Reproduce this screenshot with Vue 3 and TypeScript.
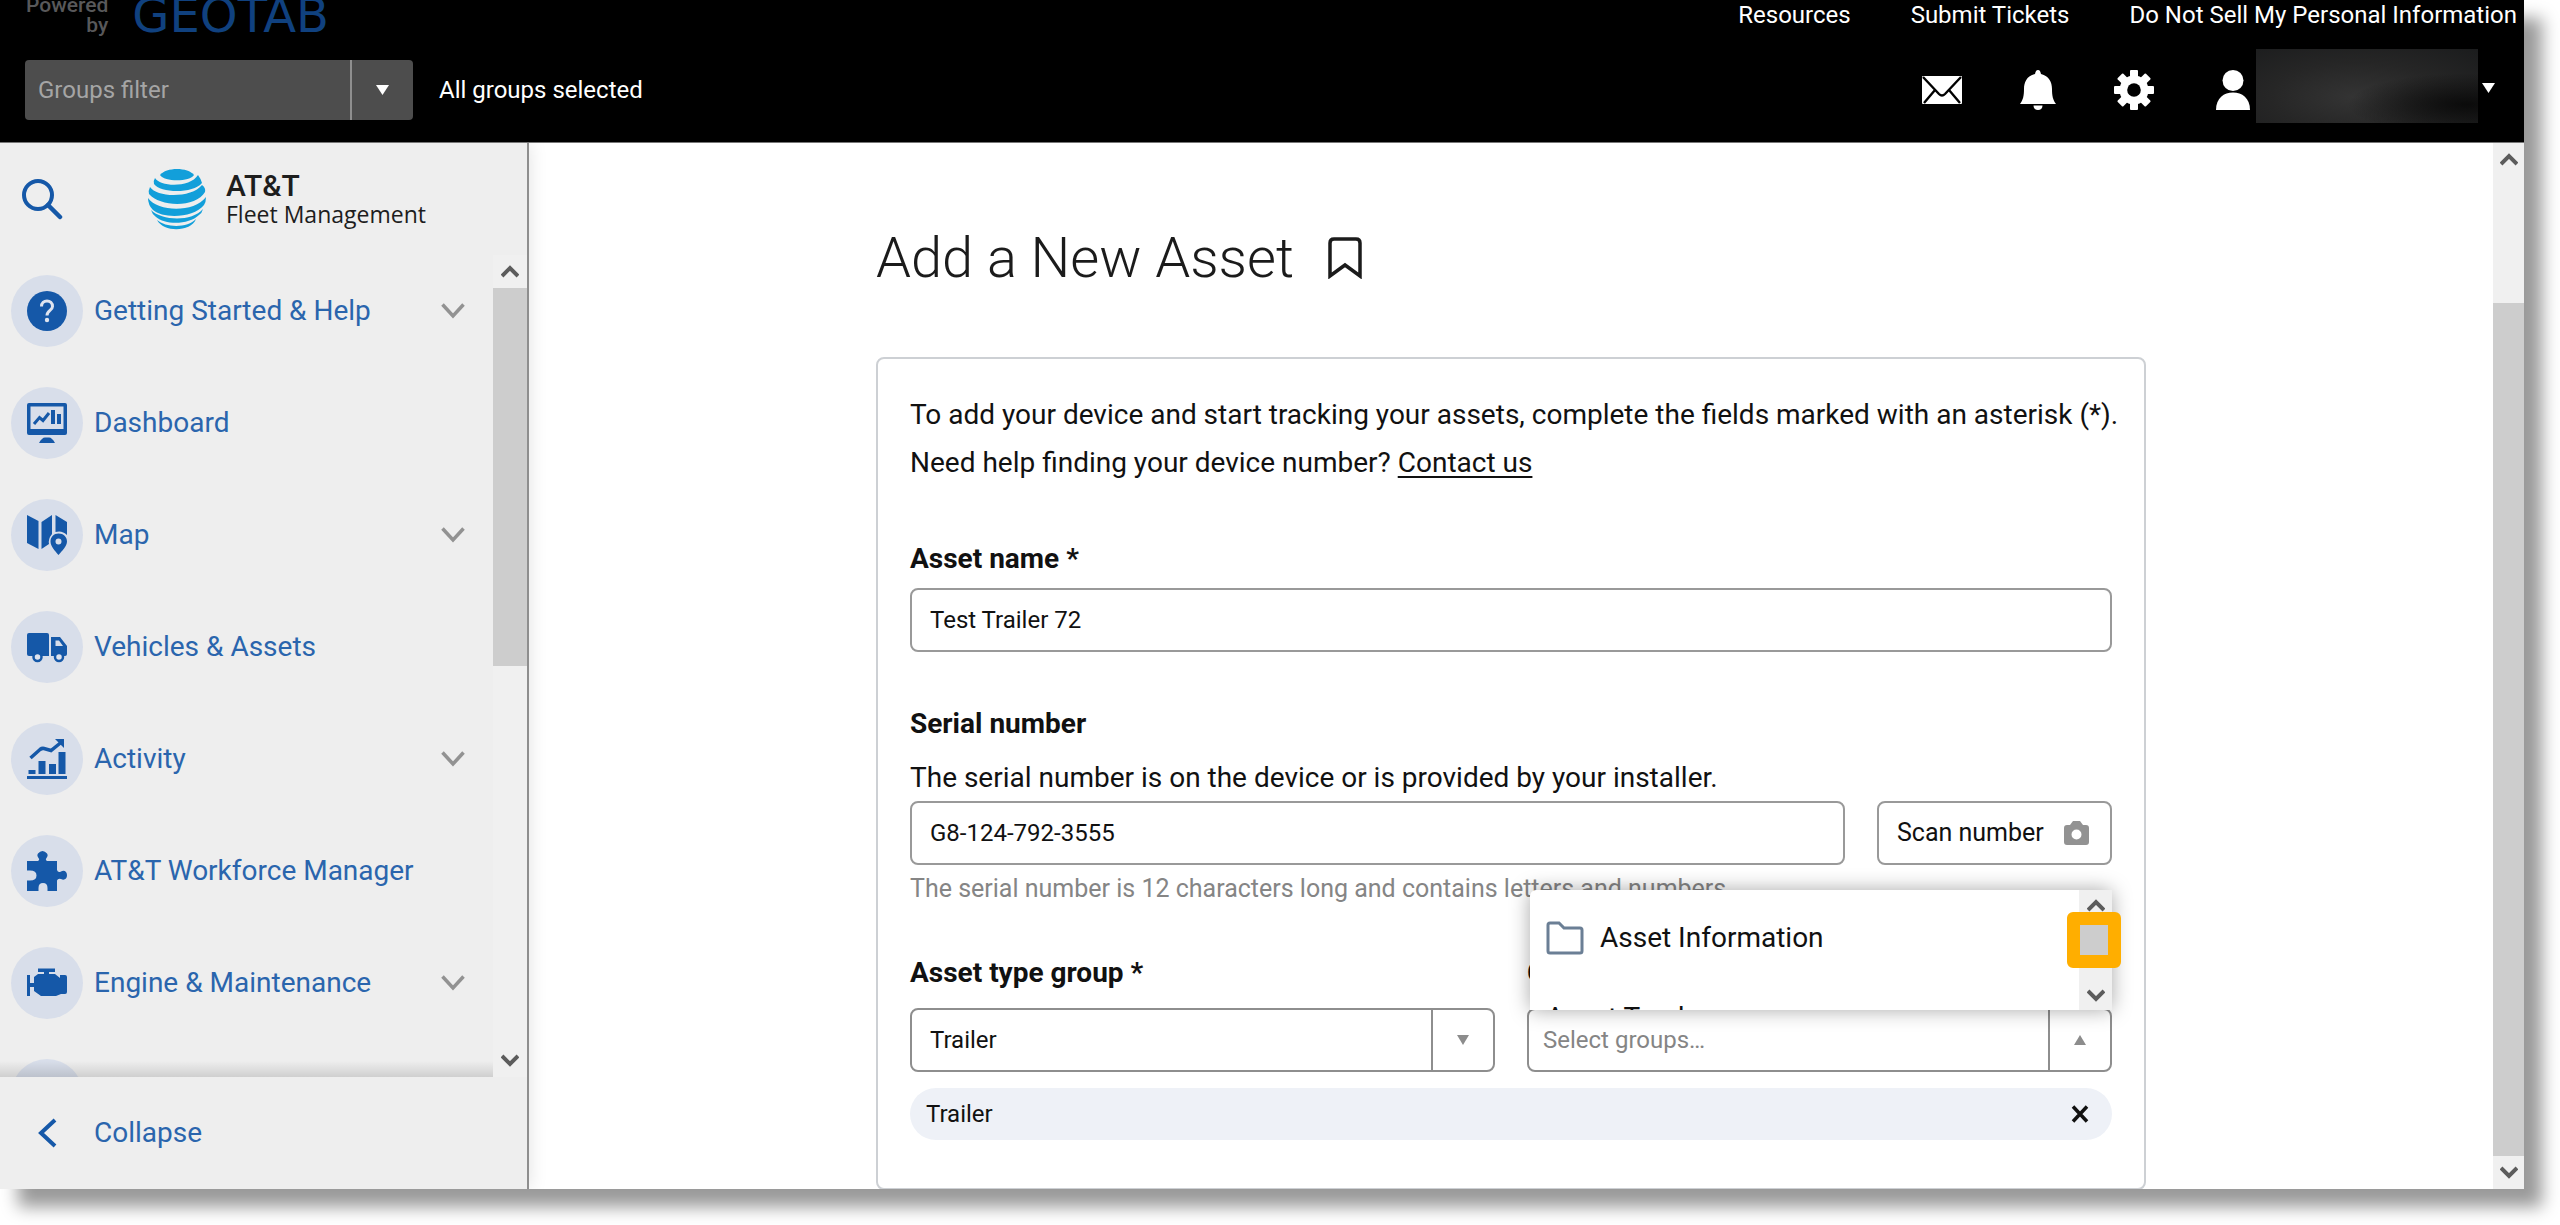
<script setup lang="ts">
import { ref } from 'vue'

interface MenuItem {
  id: string
  label: string
  expandable: boolean
}

const topLinks: string[] = ['Resources', 'Submit Tickets', 'Do Not Sell My Personal Information']

const menu: MenuItem[] = [
  { id: 'help', label: 'Getting Started & Help', expandable: true },
  { id: 'dashboard', label: 'Dashboard', expandable: false },
  { id: 'map', label: 'Map', expandable: true },
  { id: 'vehicles', label: 'Vehicles & Assets', expandable: false },
  { id: 'activity', label: 'Activity', expandable: true },
  { id: 'workforce', label: 'AT&T Workforce Manager', expandable: false },
  { id: 'engine', label: 'Engine & Maintenance', expandable: true },
]

const groupsFilter = ref('')
const assetName = ref('Test Trailer 72')
const serialNumber = ref('G8-124-792-3555')
const assetType = ref('Trailer')
const groupSearch = ref('')
</script>

<template>
  <div class="desk">
    <div class="window">
      <header class="topbar">
        <div class="topbar-row brand-row">
          <div class="powered">Powered<br />by</div>
          <div class="geotab">GEOTAB</div>
          <nav class="top-links">
            <a v-for="link in topLinks" :key="link" href="#">{{ link }}</a>
          </nav>
        </div>
        <div class="topbar-row tools-row">
          <div class="filter">
            <input v-model="groupsFilter" type="text" placeholder="Groups filter" aria-label="Groups filter" />
            <button type="button" aria-label="Open groups filter">
              <svg width="13" height="10" viewBox="0 0 13 10"><path d="M0 0H13L6.500 10Z" fill="#fff" /></svg>
            </button>
          </div>
          <span class="selected">All groups selected</span>
          <div class="actions">
            <button type="button" aria-label="Messages">
              <svg width="40" height="40" viewBox="0 0 40 40">
                <rect x="0" y="6" width="40" height="28" rx="1" fill="#fff" />
                <path d="M1 7L17 24Q20 27 23 24L39 7M2 33L13 20M38 33L27 20" fill="none" stroke="#000" stroke-width="2.4" />
              </svg>
            </button>
            <button type="button" aria-label="Notifications">
              <svg width="40" height="40" viewBox="0 0 40 40">
                <path d="M20 0C22 0 22.500 2 23 4C31 6 34 12 34 19C34 26 35 30 38 34H2C5 30 6 26 6 19C6 12 9 6 17 4C17.500 2 18 0 20 0Z" fill="#fff" />
                <path d="M15.500 35.500H24.500C24.500 38.500 22.500 40 20 40C17.500 40 15.500 38.500 15.500 35.500Z" fill="#fff" />
              </svg>
            </button>
            <button type="button" aria-label="Settings">
              <svg width="40" height="40" viewBox="0 0 40 40">
                <g fill="#fff">
                  <rect x="16" y="0" width="8" height="40" rx="1" />
                  <rect x="16" y="0" width="8" height="40" rx="1" transform="rotate(45 20 20)" />
                  <rect x="16" y="0" width="8" height="40" rx="1" transform="rotate(90 20 20)" />
                  <rect x="16" y="0" width="8" height="40" rx="1" transform="rotate(135 20 20)" />
                  <circle cx="20" cy="20" r="14.500" />
                </g>
                <circle cx="20" cy="20" r="6.800" fill="#000" />
              </svg>
            </button>
          </div>
          <button type="button" class="user" aria-label="User menu">
            <svg width="34" height="40" viewBox="0 0 34 40">
              <circle cx="17" cy="10.500" r="10.500" fill="#fff" />
              <path d="M0 40C0 28 8 22.500 17 22.500S34 28 34 40Z" fill="#fff" />
            </svg>
            <span class="user-name"></span>
            <svg class="user-caret" width="13" height="10" viewBox="0 0 13 10"><path d="M0 0H13L6.500 10Z" fill="#fff" /></svg>
          </button>
        </div>
      </header>

      <div class="body">
        <aside class="sidebar">
          <div class="side-head">
            <button type="button" class="search" aria-label="Search">
              <svg width="42" height="42" viewBox="0 0 42 42">
                <circle cx="17" cy="17" r="14" fill="none" stroke="#1558a8" stroke-width="4" />
                <path d="M27 27L39 39" stroke="#1558a8" stroke-width="4.500" stroke-linecap="round" />
              </svg>
            </button>
            <div class="logo">
              <svg width="58" height="62" viewBox="0 0 58 62" fill="#129fda">
                <path d="M12 7C18 -1 40 -1 46 7C42 14 16 14 12 7Z" />
                <path d="M7 10C12 19 42 20 50 7Q53 11 54 15C45 26 12 25 6 16Q5 13 7 10Z" />
                <path d="M2 19C9 30 44 30 54 17Q58 20 57 24C48 40 12 39 1 26Q0 23 2 19Z" />
                <path d="M0 30C10 44 46 45 58 29Q58 34 56 37C46 50 15 51 5 42Q0 37 0 30Z" />
                <path d="M3 42C14 53 44 54 55 41Q54 45 51 47C41 57 17 57 8 49Q4 46 3 42Z" />
                <path d="M9 52C18 60 40 60 48 51C43 64 16 65 9 52Z" />
              </svg>
              <div class="logo-text">
                <div class="logo-name">AT&amp;T</div>
                <div class="logo-sub">Fleet Management</div>
              </div>
            </div>
          </div>

          <div class="side-list">
            <nav class="menu">
              <a v-for="item in menu" :key="item.id" href="#" class="menu-item">
                <span class="bubble">
                  <svg width="40" height="40" viewBox="0 0 40 40" fill="#1558a8">
                    <template v-if="item.id === 'help'">
                      <circle cx="20" cy="20" r="20" />
                      <path d="M14.500 15.500C14.500 12 17 10 20 10S25.500 12 25.500 15.500C25.500 19.500 20 19.500 20 24.500" fill="none" stroke="#dfe4ef" stroke-width="3" />
                      <circle cx="20" cy="29" r="2.200" fill="#dfe4ef" />
                    </template>
                    <template v-else-if="item.id === 'dashboard'">
                      <path fill-rule="evenodd" d="M2 0H38Q40 0 40 2V30Q40 32 38 32H2Q0 32 0 30V2Q0 0 2 0ZM3.500 3.500V26H36.500V3.500Z" />
                      <path d="M7 21L12.500 14.500L16 17.500L22 10" fill="none" stroke="#1558a8" stroke-width="3" />
                      <rect x="24" y="7" width="4" height="14" />
                      <rect x="30" y="11" width="4" height="10" />
                      <path d="M12 40Q15 34.500 18 34.500H22Q25 34.500 28 40Z" />
                    </template>
                    <template v-else-if="item.id === 'map'">
                      <path d="M0 0L11.500 6V34L0 28Z" />
                      <path d="M14.500 7L25 0V19Q21 24 22 29L14.500 34Z" />
                      <path d="M28.500 0L40 7V20Q35 15 28.500 17Z" />
                      <path fill-rule="evenodd" d="M31.500 18.500C36.500 18.500 40 22 40 26.500C40 31 35 36 31.500 40C28 36 23.500 31 23.500 26.500C23.500 22 27 18.500 31.500 18.500ZM31.500 23.500A3 3 0 1 0 31.500 29.500A3 3 0 1 0 31.500 23.500Z" />
                    </template>
                    <template v-else-if="item.id === 'vehicles'">
                      <path d="M2 6H20Q22 6 22 8V29H2Q0 29 0 27V8Q0 6 2 6Z" />
                      <path fill-rule="evenodd" d="M24 10H33L40 19V27Q40 29 38 29H24ZM28.500 13.500V19H36L32 13.500Z" />
                      <circle cx="10.500" cy="30" r="4" fill="#dfe4ef" stroke="#1558a8" stroke-width="2.500" />
                      <circle cx="32" cy="30" r="4" fill="#dfe4ef" stroke="#1558a8" stroke-width="2.500" />
                    </template>
                    <template v-else-if="item.id === 'activity'">
                      <rect x="0" y="37" width="40" height="3" />
                      <rect x="1.500" y="31" width="7" height="4" />
                      <rect x="11.500" y="22" width="7" height="13" />
                      <rect x="22" y="25" width="7" height="10" />
                      <rect x="31.500" y="13" width="7" height="22" />
                      <path d="M3.500 19L13 10.500Q15 9 17 9.500L24 11.500L34 3.500" fill="none" stroke="#1558a8" stroke-width="3.500" />
                      <path d="M28 0H37V9Z" />
                    </template>
                    <template v-else-if="item.id === 'workforce'">
                      <path d="M0 10H11Q13 9 11.500 7Q9.500 4.500 11 2.500Q13 0 15.500 0T20 2.500Q21.500 4.500 19.500 7Q18 9 20 10H30V19Q31 22 34 20.500Q37 19 39 21Q41 24 39 27.500Q37 29.500 34 28Q31 27 30 29.500V40H20.500V37Q20.500 32 16 32T11.500 37V40H0V29.500H3Q9.500 29.500 9.500 24.500T3 19.500H0Z" />
                    </template>
                    <template v-else>
                      <rect x="11" y="5.500" width="17" height="3.500" />
                      <rect x="17" y="8" width="5" height="5" />
                      <rect x="0" y="12" width="3" height="21" />
                      <rect x="2" y="20" width="6" height="4" />
                      <path d="M11 11H28L33 15V12H38Q40 12 40 14V29Q40 31 38 31H34L29 33H14L7 28V14Z" />
                    </template>
                  </svg>
                </span>
                <span class="menu-label">{{ item.label }}</span>
                <svg v-if="item.expandable" width="24" height="16" viewBox="0 0 24 16">
                  <path d="M1.500 1.500L12 13L22.500 1.500" fill="none" stroke="#929292" stroke-width="3.500" />
                </svg>
              </a>
              <a href="#" class="menu-item" aria-label="More"><span class="bubble"></span></a>
            </nav>
            <div class="scrollbar side-scroll">
              <button type="button" aria-label="Scroll menu up">
                <svg width="18" height="13" viewBox="0 0 18 13"><path d="M1 11L9 3L17 11" fill="none" stroke="#5c5c5c" stroke-width="4" /></svg>
              </button>
              <div class="track"><div class="thumb"></div></div>
              <button type="button" aria-label="Scroll menu down">
                <svg width="18" height="13" viewBox="0 0 18 13"><path d="M1 2L9 10L17 2" fill="none" stroke="#5c5c5c" stroke-width="4" /></svg>
              </button>
            </div>
          </div>

          <button type="button" class="collapse">
            <span class="collapse-icon">
              <svg width="20" height="30" viewBox="0 0 20 30"><path d="M18 2L4 15L18 28" fill="none" stroke="#1558a8" stroke-width="4" /></svg>
            </span>
            <span>Collapse</span>
          </button>
        </aside>

        <main class="main">
          <div class="content">
            <div class="title-row">
              <h1>Add a New Asset</h1>
              <button type="button" aria-label="Bookmark">
                <svg width="34" height="42" viewBox="0 0 34 42">
                  <path d="M2 39V6Q2 2 6 2H28Q32 2 32 6V39L17 28Z" fill="none" stroke="#1b1b1b" stroke-width="3.500" />
                </svg>
              </button>
            </div>

            <form class="card" @submit.prevent>
              <p class="intro">
                To add your device and start tracking your assets, complete the fields marked with an asterisk (*).<br />
                Need help finding your device number? <a href="#">Contact us</a>
              </p>

              <label class="label" for="asset-name">Asset name *</label>
              <input id="asset-name" v-model="assetName" class="field name-field" type="text" />

              <label class="label" for="serial">Serial number</label>
              <p class="desc">The serial number is on the device or is provided by your installer.</p>
              <div class="serial-row">
                <input id="serial" v-model="serialNumber" class="field" type="text" />
                <button type="button" class="scan">
                  Scan number
                  <svg width="25" height="24" viewBox="0 0 25 24">
                    <path fill-rule="evenodd" d="M3 4H6L9 0H16L19 4H22Q25 4 25 7V21Q25 24 22 24H3Q0 24 0 21V7Q0 4 3 4ZM12.500 8.500A5 5 0 1 0 12.500 18.500A5 5 0 1 0 12.500 8.500Z" fill="#929292" />
                  </svg>
                </button>
              </div>
              <p class="hint">The serial number is 12 characters long and contains letters and numbers.</p>

              <div class="groups-row">
                <div class="group-col">
                  <label class="label" for="asset-type">Asset type group *</label>
                  <div class="combo">
                    <select id="asset-type" v-model="assetType">
                      <option>Trailer</option>
                    </select>
                    <span class="combo-caret">
                      <svg width="12" height="10" viewBox="0 0 12 10"><path d="M0 0H12L6 10Z" fill="#8c8c8c" /></svg>
                    </span>
                  </div>
                </div>
                <div class="group-col">
                  <label class="label" for="groups">Groups</label>
                  <div class="combo">
                    <input id="groups" v-model="groupSearch" type="text" placeholder="Select groups…" />
                    <button type="button" class="combo-caret" aria-label="Close groups list">
                      <svg width="12" height="10" viewBox="0 0 12 10"><path d="M0 10H12L6 0Z" fill="#8c8c8c" /></svg>
                    </button>
                    <div class="popup">
                      <ul>
                        <li class="option">
                          <svg width="38" height="34" viewBox="0 0 38 34">
                            <path d="M2 4Q2 2 4 2H13L18 7H34Q36 7 36 9V30Q36 32 34 32H4Q2 32 2 30Z" fill="none" stroke="#6b7f95" stroke-width="3" />
                          </svg>
                          Asset Information
                        </li>
                        <li class="option">Asset Tracker</li>
                      </ul>
                      <div class="scrollbar popup-scroll">
                        <button type="button" aria-label="Scroll list up">
                          <svg width="18" height="13" viewBox="0 0 18 13"><path d="M1 11L9 3L17 11" fill="none" stroke="#5c5c5c" stroke-width="4" /></svg>
                        </button>
                        <div class="track"></div>
                        <button type="button" aria-label="Scroll list down">
                          <svg width="18" height="13" viewBox="0 0 18 13"><path d="M1 2L9 10L17 2" fill="none" stroke="#5c5c5c" stroke-width="4" /></svg>
                        </button>
                        <div class="marker"></div>
                      </div>
                    </div>
                  </div>
                </div>
              </div>

              <div class="chip">
                <span>Trailer</span>
                <button type="button" aria-label="Remove Trailer">
                  <svg width="18" height="18" viewBox="0 0 18 18"><path d="M2 1.500L16 16.500M16 1.500L2 16.500" stroke="#111" stroke-width="3.500" /></svg>
                </button>
              </div>
            </form>
          </div>

          <div class="scrollbar main-scroll">
            <button type="button" aria-label="Scroll page up">
              <svg width="18" height="13" viewBox="0 0 18 13"><path d="M1 11L9 3L17 11" fill="none" stroke="#5c5c5c" stroke-width="4" /></svg>
            </button>
            <div class="track"><div class="thumb"></div></div>
            <button type="button" aria-label="Scroll page down">
              <svg width="18" height="13" viewBox="0 0 18 13"><path d="M1 2L9 10L17 2" fill="none" stroke="#5c5c5c" stroke-width="4" /></svg>
            </button>
          </div>
        </main>
      </div>
    </div>
  </div>
</template>

<style>
body {
  margin: 0;
  background: #fff;
}
</style>

<style scoped>
.desk,
.desk * {
  box-sizing: border-box;
}

.desk {
  display: flex;
  height: 100vh;
  padding: 0 36px 36px 0;
  overflow: hidden;
}

.window {
  display: flex;
  flex: 1;
  flex-direction: column;
  min-width: 0;
  background: #fff;
  box-shadow: 18px 18px 16px rgba(0, 0, 0, 0.4);
  color: #111;
  font: 24px/32px Roboto, 'Liberation Sans', sans-serif;
}

button,
input,
select {
  margin: 0;
  padding: 0;
  border: 0;
  background: none;
  color: inherit;
  font: inherit;
}

button {
  display: flex;
  align-items: center;
  justify-content: center;
}

svg {
  display: block;
  flex: none;
}

a {
  color: inherit;
  text-decoration: none;
}

/* top bar */
.topbar {
  flex: none;
  padding-bottom: 19px;
  overflow: hidden;
  border-bottom: 1px solid #777;
  background: #000;
  color: #fff;
}

.topbar-row {
  display: flex;
  align-items: center;
}

.brand-row {
  height: 34px;
  margin: -2px 7px 17px 26px;
}

.powered {
  color: #58585a;
  font-size: 21px;
  font-weight: 500;
  line-height: 20px;
  text-align: right;
}

.geotab {
  margin-left: 24px;
  color: #10417f;
  font: 48px/36px 'DejaVu Sans', sans-serif;
}

.top-links {
  display: flex;
  gap: 60px;
  margin-left: auto;
}

.tools-row {
  height: 74px;
  padding: 0 29px 0 25px;
}

.filter {
  display: flex;
  width: 388px;
  height: 60px;
  margin-top: 8px;
  overflow: hidden;
  border-radius: 4px;
  background: #4d4d4d;
}

.filter input {
  flex: 1;
  min-width: 0;
  padding-left: 13px;
}

.filter input::placeholder {
  color: #a5a5a5;
  opacity: 1;
}

.filter button {
  width: 63px;
  border-left: 2px solid #8f8f8f;
}

.selected {
  margin: 8px 0 0 26px;
}

.actions {
  display: flex;
  gap: 56px;
  margin: 8px 62px 0 auto;
}

.user-name {
  width: 222px;
  height: 74px;
  margin: 0 4px 0 6px;
  background:
    radial-gradient(ellipse at 95% 75%, #0b0b0b 0%, rgba(11, 11, 11, 0) 40%),
    radial-gradient(ellipse at 45% 65%, #343434 0%, #262626 50%, #1b1c1d 100%);
}

.user > svg {
  margin-top: 8px;
}

.user > .user-caret {
  margin-top: 4px;
}

/* sidebar */
.body {
  display: flex;
  flex: 1;
  min-height: 0;
}

.sidebar {
  position: relative;
  z-index: 1;
  display: flex;
  flex: none;
  flex-direction: column;
  width: 529px;
  border-right: 2px solid #8e8e8e;
  background: #eee;
  box-shadow: 0 0 18px rgba(0, 0, 0, 0.12);
  clip-path: inset(0 -24px 0 0);
  color: #2a65ad;
  font-size: 28px;
}

.side-head {
  display: flex;
  flex: none;
  align-items: center;
  height: 112px;
  padding-left: 21px;
}

.logo {
  display: flex;
  align-items: center;
  gap: 20px;
  margin-left: 85px;
}

.logo-text {
  color: #1d1d1d;
  font: 500 23px/26px 'Open Sans', 'Noto Sans', sans-serif;
}

.logo-name {
  font: 500 30px/30px Roboto, sans-serif;
}

.side-list {
  display: flex;
  flex: 1;
  min-height: 0;
}

.menu {
  position: relative;
  flex: 1;
  overflow: hidden;
}

.menu::after {
  content: '';
  position: absolute;
  right: 0;
  bottom: 0;
  left: 0;
  height: 16px;
  background: linear-gradient(rgba(0, 0, 0, 0), rgba(0, 0, 0, 0.13));
}

.menu-item {
  display: flex;
  align-items: center;
  height: 112px;
  padding: 0 28px 0 11px;
}

.bubble {
  display: flex;
  flex: none;
  align-items: center;
  justify-content: center;
  width: 72px;
  height: 72px;
  border-radius: 50%;
  background: #d8deea;
}

.menu-label {
  flex: 1;
  margin-left: 11px;
}

.collapse {
  flex: none;
  justify-content: flex-start;
  height: 112px;
  padding-left: 11px;
}

.collapse-icon {
  display: flex;
  justify-content: center;
  width: 72px;
  margin-right: 11px;
}

/* scroll bars */
.scrollbar {
  display: flex;
  flex: none;
  flex-direction: column;
  background: #f0f0f0;
}

.scrollbar button {
  flex: none;
  height: 33px;
}

.track {
  flex: 1;
}

.thumb {
  background: #cdcdcd;
}

.side-scroll {
  width: 34px;
}

.side-scroll .thumb {
  height: 50%;
}

.main-scroll {
  width: 31px;
}

.main-scroll .track {
  display: flex;
  flex-direction: column;
  justify-content: flex-end;
}

.main-scroll .thumb {
  height: 87%;
}

/* main area */
.main {
  display: flex;
  flex: 1;
  min-width: 0;
}

.content {
  flex: 1;
  min-width: 0;
  padding: 83px 32px 0;
  overflow: hidden;
}

.title-row,
.card {
  max-width: 1270px;
  margin: 0 auto;
}

.title-row {
  display: flex;
  align-items: center;
  gap: 34px;
}

h1 {
  margin: 0;
  color: #1b1b1b;
  font-size: 56px;
  font-weight: 300;
  line-height: 64px;
}

.card {
  margin-top: 67px;
  padding: 32px 32px 48px;
  border: 2px solid #cdd0d4;
  border-radius: 8px;
}

p {
  margin: 0;
}

.intro {
  font-size: 28px;
  line-height: 48px;
  white-space: nowrap;
}

.intro a {
  text-decoration: underline;
  text-decoration-thickness: 2px;
  text-underline-offset: 4px;
}

.label {
  display: block;
  margin-top: 56px;
  font-size: 28px;
  font-weight: 700;
}

.field {
  width: 100%;
  height: 64px;
  padding: 0 18px;
  border: 2px solid #999;
  border-radius: 8px;
}

.name-field {
  display: block;
  margin-top: 13px;
}

.desc {
  margin: 22px 0 7px;
  font-size: 28px;
}

.serial-row {
  display: flex;
  gap: 32px;
}

.serial-row .field {
  flex: 1;
  min-width: 0;
}

.scan {
  flex: none;
  justify-content: space-between;
  width: 235px;
  padding: 0 21px 0 18px;
  border: 2px solid #999;
  border-radius: 8px;
  font-size: 25px;
}

.hint {
  margin-top: 8px;
  color: #858585;
  font-size: 25px;
}

.groups-row {
  display: flex;
  gap: 32px;
}

.group-col {
  flex: 1;
  min-width: 0;
}

.group-col .label {
  margin: 52px 0 19px;
}

.combo {
  position: relative;
  display: flex;
  height: 64px;
  border: 2px solid #8e8e8e;
  border-radius: 8px;
}

.combo select,
.combo input {
  flex: 1;
  min-width: 0;
  padding-left: 18px;
  appearance: none;
}

.combo input {
  padding-left: 14px;
}

.combo input::placeholder {
  color: #858585;
  opacity: 1;
}

.combo-caret {
  display: flex;
  flex: none;
  align-items: center;
  justify-content: center;
  width: 62px;
  border-left: 2px solid #8e8e8e;
}

.popup {
  position: absolute;
  right: -2px;
  bottom: 100%;
  left: 1px;
  display: flex;
  height: 120px;
  border-radius: 6px 6px 0 0;
  background: #fff;
  box-shadow: 0 0 20px rgba(0, 0, 0, 0.35);
}

.popup ul {
  flex: 1;
  margin: 0;
  padding: 8px 16px 0;
  overflow: hidden;
  list-style: none;
}

.option {
  display: flex;
  align-items: center;
  gap: 16px;
  height: 80px;
  font-size: 28px;
}

.popup-scroll {
  position: relative;
  width: 33px;
}

.popup-scroll button {
  height: 30px;
}

/* call-out frame around the list's scroll thumb */
.marker {
  position: absolute;
  top: 22px;
  left: -12px;
  width: 54px;
  height: 56px;
  border: 13px solid #ffae00;
  border-radius: 6px;
  background: #cdcdcd;
}

.chip {
  display: flex;
  align-items: center;
  justify-content: space-between;
  height: 52px;
  margin-top: 16px;
  padding: 0 23px 0 16px;
  border-radius: 26px;
  background: #eef1f7;
}
</style>
